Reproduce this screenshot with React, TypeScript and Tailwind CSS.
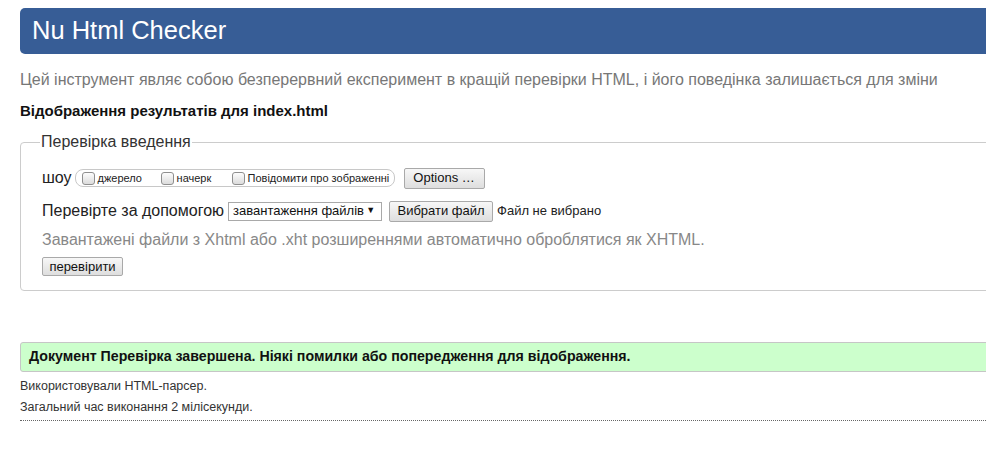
import { ReactNode } from "react";

const font = "font-['Liberation_Sans',Arial,sans-serif]";

function Box({ label }: { label: string }) {
  return (
    <span className="flex items-center">
      <span className="inline-block w-[13px] h-[13px] rounded-[3px] border border-[#8f8f8f] bg-gradient-to-b from-[#fdfdfd] to-[#dcdcdc]" />
      <span className="ml-[3px] text-[11px] text-[#222]">{label}</span>
    </span>
  );
}

function Btn({ children, className }: { children: ReactNode; className?: string }) {
  return (
    <span
      className={
        "inline-flex items-center justify-center border border-[#a9a9a9] rounded-[2px] bg-gradient-to-b from-[#f7f7f7] to-[#dedede] text-[13px] text-[#111] " +
        (className ?? "")
      }
    >
      {children}
    </span>
  );
}

export default function App() {
  return (
    <div className={`w-[986px] h-[459px] overflow-hidden bg-white ${font}`}>
      <div className="w-[1010px] pl-5 pt-2">
        <div className="h-[46px] bg-[#375d96] rounded-[5px] flex items-center pl-3">
          <span className="text-white text-[25.5px] leading-none -mt-[1px]">Nu Html Checker</span>
        </div>

        <p className="mt-[15px] text-[16px] leading-[22px] text-[#777]">
          Цей інструмент являє собою безперервний експеримент в кращій перевірки HTML, і його
          поведінка залишається для зміни
        </p>

        <h2 className="mt-[10px] text-[15px] leading-[20px] font-bold text-[#111]">
          Відображення результатів для index.html
        </h2>

        <fieldset className="mt-[13px] border border-[#cccccc] rounded-[4px] px-[21px] pb-[14px]">
          <legend className="-ml-[2px] px-[1px] text-[16px] leading-[16px] text-[#333]">
            Перевірка введення
          </legend>

          <div className="mt-[17px] h-[22px] flex items-center">
            <span className="text-[16px] text-[#222]">шоу</span>
            <span className="ml-[3px] h-[18px] w-[320px] flex items-center border border-[#c8c8c8] rounded-[8px] pl-[6px]">
              <span className="w-[79px]">
                <Box label="джерело" />
              </span>
              <span className="w-[71px]">
                <Box label="начерк" />
              </span>
              <Box label="Повідомити про зображенні" />
            </span>
            <Btn className="ml-[9px] w-[81px] h-[21px]">Options …</Btn>
          </div>

          <div className="mt-[11px] h-[22px] flex items-center">
            <span className="text-[16px] text-[#222]">Перевірте за допомогою</span>
            <span className="ml-[4px] w-[154px] h-[19px] border border-[#a9a9a9] flex items-center justify-between pl-[4px] pr-[6px] text-[13px] text-[#111]">
              <span>завантаження файлів</span>
              <span className="text-[9px]">▼</span>
            </span>
            <Btn className="ml-[7px] w-[104px] h-[21px]">Вибрати файл</Btn>
            <span className="ml-[4px] text-[13px] text-[#222]">Файл не вибрано</span>
          </div>

          <p className="mt-[8px] text-[16px] leading-[20px] text-[#888]">
            Завантажені файли з Xhtml або .xht розширеннями автоматично оброблятися як XHTML.
          </p>

          <div className="mt-[7px] flex">
            <Btn className="w-[81px] h-[19px]">перевірити</Btn>
          </div>
        </fieldset>

        <div className="mt-[51px] h-[30px] bg-[#ccffcc] border border-[#c6c6c6] rounded-[3px] flex items-center pl-[8px]">
          <span className="text-[14.2px] font-bold text-[#111]">
            Документ Перевірка завершена. Ніякі помилки або попередження для відображення.
          </span>
        </div>

        <p className="mt-[4px] text-[12.5px] leading-[21px] text-[#333]">
          Використовували HTML-парсер.
        </p>
        <p className="text-[12.5px] leading-[21px] text-[#333]">
          Загальний час виконання 2 мілісекунди.
        </p>
        <div className="mt-[2px] border-t border-dotted border-[#666]" />
      </div>
    </div>
  );
}
